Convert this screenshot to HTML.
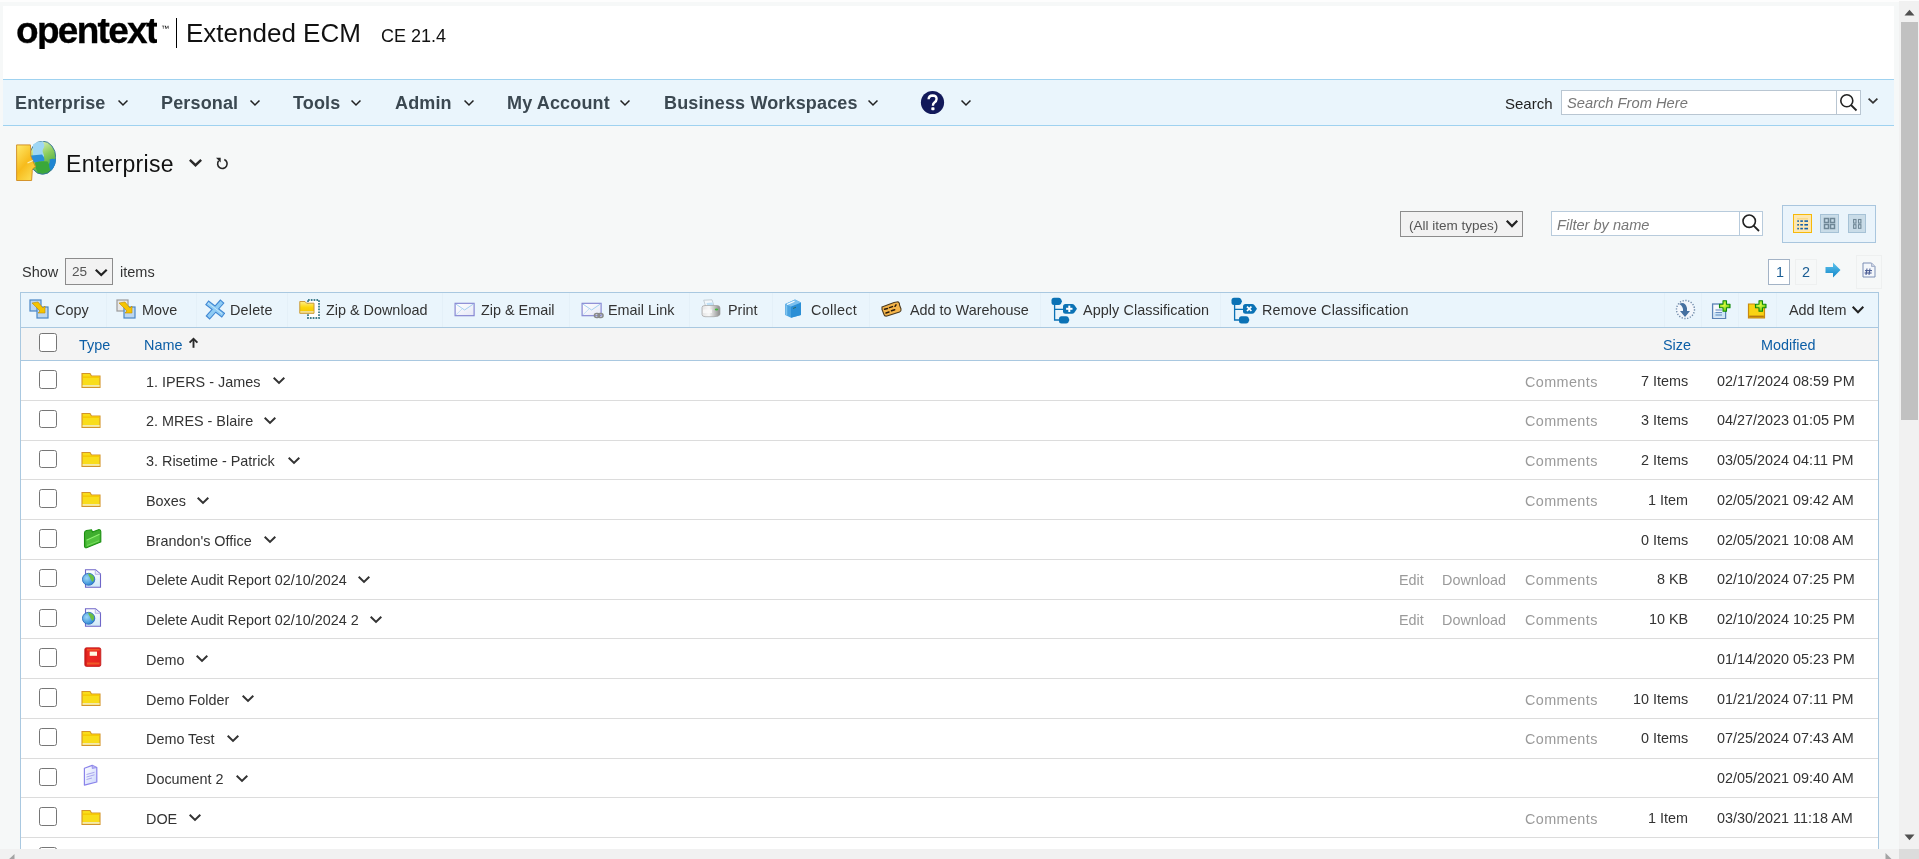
<!DOCTYPE html>
<html><head><meta charset="utf-8"><title>Enterprise</title>
<style>
html,body{margin:0;padding:0;}
body{width:1919px;height:859px;overflow:hidden;position:relative;background:#f6f8f8;font-family:"Liberation Sans",sans-serif;}
.t{position:absolute;white-space:nowrap;will-change:transform;}
.r{position:absolute;}
</style></head><body>
<div class="r" style="left:0px;top:0px;width:1919px;height:2px;background:#fdfdfd"></div>
<div class="r" style="left:3px;top:6px;width:1891px;height:73px;background:#fff"></div>
<div class="r" style="left:3px;top:79px;width:1891px;height:47px;background:#eaf5fc;border-top:1px solid #9fd2f0;border-bottom:1px solid #9fd2f0;box-sizing:border-box"></div>
<div class="t" style="left:15.50px;top:11.98px;font-size:37px;line-height:37px;color:#000;font-weight:bold;font-style:normal;letter-spacing:-1.7px;clip-path:inset(7.4px 0 0.3px 0);-webkit-text-stroke:0.3px #000">opentext</div>
<div class="t" style="left:160.50px;top:24.73px;font-size:8px;line-height:8px;color:#000;font-weight:normal;font-style:normal;">&trade;</div>
<div class="r" style="left:176px;top:18px;width:1px;height:30px;background:#000"></div>
<div class="t" style="left:186.00px;top:20.39px;font-size:26px;line-height:26px;color:#111;font-weight:normal;font-style:normal;">Extended ECM</div>
<div class="t" style="left:381.00px;top:27.16px;font-size:18px;line-height:18px;color:#111;font-weight:normal;font-style:normal;">CE 21.4</div>
<div class="t" style="left:15.00px;top:94.36px;font-size:18px;line-height:18px;color:#3b4851;font-weight:bold;font-style:normal;letter-spacing:0.15px">Enterprise</div>
<svg class="r" style="left:115.5px;top:98px" width="14" height="10" viewBox="0 0 14 10"><polyline points="2.54,2.54 7.00,6.99 11.46,2.54" fill="none" stroke="#222" stroke-width="1.55" stroke-linecap="butt" stroke-linejoin="miter"/></svg>
<div class="t" style="left:161.00px;top:94.36px;font-size:18px;line-height:18px;color:#3b4851;font-weight:bold;font-style:normal;letter-spacing:0.15px">Personal</div>
<svg class="r" style="left:248px;top:98px" width="14" height="10" viewBox="0 0 14 10"><polyline points="2.54,2.54 7.00,6.99 11.46,2.54" fill="none" stroke="#222" stroke-width="1.55" stroke-linecap="butt" stroke-linejoin="miter"/></svg>
<div class="t" style="left:293.00px;top:94.36px;font-size:18px;line-height:18px;color:#3b4851;font-weight:bold;font-style:normal;letter-spacing:0.15px">Tools</div>
<svg class="r" style="left:349px;top:98px" width="14" height="10" viewBox="0 0 14 10"><polyline points="2.54,2.54 7.00,6.99 11.46,2.54" fill="none" stroke="#222" stroke-width="1.55" stroke-linecap="butt" stroke-linejoin="miter"/></svg>
<div class="t" style="left:395.00px;top:94.36px;font-size:18px;line-height:18px;color:#3b4851;font-weight:bold;font-style:normal;letter-spacing:0.15px">Admin</div>
<svg class="r" style="left:461.75px;top:98px" width="14" height="10" viewBox="0 0 14 10"><polyline points="2.54,2.54 7.00,6.99 11.46,2.54" fill="none" stroke="#222" stroke-width="1.55" stroke-linecap="butt" stroke-linejoin="miter"/></svg>
<div class="t" style="left:507.00px;top:94.36px;font-size:18px;line-height:18px;color:#3b4851;font-weight:bold;font-style:normal;letter-spacing:0.15px">My Account</div>
<svg class="r" style="left:618px;top:98px" width="14" height="10" viewBox="0 0 14 10"><polyline points="2.54,2.54 7.00,6.99 11.46,2.54" fill="none" stroke="#222" stroke-width="1.55" stroke-linecap="butt" stroke-linejoin="miter"/></svg>
<div class="t" style="left:664.00px;top:94.36px;font-size:18px;line-height:18px;color:#3b4851;font-weight:bold;font-style:normal;letter-spacing:0.15px">Business Workspaces</div>
<svg class="r" style="left:866px;top:98px" width="14" height="10" viewBox="0 0 14 10"><polyline points="2.54,2.54 7.00,6.99 11.46,2.54" fill="none" stroke="#222" stroke-width="1.55" stroke-linecap="butt" stroke-linejoin="miter"/></svg>
<svg class="r" style="left:920px;top:90px" width="25" height="25" viewBox="0 0 25 25"><circle cx="12.5" cy="12.5" r="11.6" fill="#12195a"/><path d="M8.6 9.3 Q8.8 5.6 12.6 5.5 Q16.6 5.6 16.6 8.9 Q16.5 11.1 14.4 12.4 Q12.9 13.4 12.9 15.7" fill="none" stroke="#fff" stroke-width="2.4"/><rect x="11.3" y="17.3" width="3.2" height="2.9" rx="0.8" fill="#fff"/></svg>
<svg class="r" style="left:958.5px;top:98px" width="14" height="10" viewBox="0 0 14 10"><polyline points="2.54,2.54 7.00,6.99 11.46,2.54" fill="none" stroke="#222" stroke-width="1.55" stroke-linecap="butt" stroke-linejoin="miter"/></svg>
<div class="t" style="left:1505.00px;top:96.30px;font-size:15px;line-height:15px;color:#222;font-weight:normal;font-style:normal;">Search</div>
<div class="r" style="left:1561px;top:90px;width:300px;height:25px;background:#fff;border:1px solid #b9c6d2;box-sizing:border-box"></div>
<div class="r" style="left:1836px;top:90px;width:1px;height:25px;background:#b9c6d2"></div>
<div class="t" style="left:1566.50px;top:95.76px;font-size:14.7px;line-height:14.7px;color:#777;font-weight:normal;font-style:italic;">Search From Here</div>
<svg class="r" style="left:1839px;top:93px" width="19" height="19" viewBox="0 0 19 19"><circle cx="7.8" cy="7.8" r="6" fill="none" stroke="#222" stroke-width="1.6"/><line x1="12" y1="12" x2="17.5" y2="17.5" stroke="#222" stroke-width="1.8"/></svg>
<svg class="r" style="left:1866px;top:95.5px" width="14" height="10" viewBox="0 0 14 10"><polyline points="2.59,2.59 7.00,6.89 11.40,2.59" fill="none" stroke="#333" stroke-width="1.7" stroke-linecap="butt" stroke-linejoin="miter"/></svg>
<svg class="r" style="left:16px;top:141px" width="40" height="40" viewBox="0 0 40 40">
<defs><linearGradient id="gg" x1="0.3" y1="0" x2="0.8" y2="1"><stop offset="0" stop-color="#e8f4c0"/><stop offset="0.45" stop-color="#8ccd5c"/><stop offset="1" stop-color="#2c9a3a"/></linearGradient>
<linearGradient id="fc" x1="0" y1="0" x2="0.6" y2="1"><stop offset="0" stop-color="#ffea6a"/><stop offset="0.6" stop-color="#f7bb1c"/><stop offset="1" stop-color="#fbd84a"/></linearGradient></defs>
<ellipse cx="26.6" cy="16.7" rx="13.2" ry="16.6" fill="url(#gg)" stroke="#2e6e9c" stroke-width="0.9"/>
<path d="M17 3.5 Q21 0.3 27 0.6 Q29 4 28 6.5 Q25.5 9.5 27.5 13 Q29 15 27 17 L17 17z" fill="#9fd6f4"/>
<path d="M15 14.5 L26 13.5 Q29.5 17.5 28 20 Q23 20.5 20 21.5 L15 21z" fill="#2a8fd8"/>
<path d="M33.5 18.5 Q37 17 39.8 18.5 Q39.5 25 35.5 29.5 Q32 27 33 23 Q34.5 21 33.5 18.5z" fill="#1f86d2"/>
<path d="M19 21.5 Q25 19.5 31.5 20.5 Q34 24 33.5 28 Q30 32.5 22 32 Q19 27 19 21.5z" fill="#3aa83a"/>
<path d="M0.6 3.9 H14.4 Q15 9 14.8 15 Q16.5 19 17.2 21 L19.5 25.8 L17 27.5 Q15.8 29 16.2 31 L15.6 39.5 H0.6z" fill="url(#fc)" stroke="#cf8a1e" stroke-width="0.9"/>
<path d="M11.5 22 L17 19.5" stroke="#fff6c8" stroke-width="1.3" opacity="0.9"/>
</svg>
<div class="t" style="left:65.80px;top:153.13px;font-size:23px;line-height:23px;color:#111;font-weight:normal;font-style:normal;letter-spacing:0.3px">Enterprise</div>
<svg class="r" style="left:186.5px;top:157px" width="17" height="11.8" viewBox="0 0 17 11.8"><polyline points="2.84,2.84 8.50,8.24 14.16,2.84" fill="none" stroke="#2a2a2a" stroke-width="2.4" stroke-linecap="butt" stroke-linejoin="miter"/></svg>
<svg class="r" style="left:214px;top:155.3px" width="16" height="16" viewBox="0 0 16 16"><path d="M4.7 5.7 A4.75 4.75 0 1 0 10.3 4.4" fill="none" stroke="#262626" stroke-width="1.6"/><path d="M2 2.8 H6.7 V7.5z" fill="#262626"/></svg>
<div class="r" style="left:1400px;top:211px;width:123px;height:26px;background:#f2f2f2;border:1px solid #8c8c8c;box-sizing:border-box"></div>
<div class="t" style="left:1409.00px;top:218.87px;font-size:13.5px;line-height:13.5px;color:#555;font-weight:normal;font-style:normal;">(All item types)</div>
<svg class="r" style="left:1503.5px;top:218px" width="16" height="11.5" viewBox="0 0 16 11.5"><polyline points="2.77,2.77 8.00,8.07 13.23,2.77" fill="none" stroke="#222" stroke-width="2.2" stroke-linecap="butt" stroke-linejoin="miter"/></svg>
<div class="r" style="left:1551px;top:211px;width:212px;height:25px;background:#fff;border:1px solid #b8cbdc;box-sizing:border-box"></div>
<div class="r" style="left:1739px;top:211px;width:1px;height:25px;background:#b8cbdc"></div>
<div class="t" style="left:1557.00px;top:217.64px;font-size:14.6px;line-height:14.6px;color:#777;font-weight:normal;font-style:italic;">Filter by name</div>
<svg class="r" style="left:1741px;top:213px" width="20" height="20" viewBox="0 0 20 20"><circle cx="8.2" cy="8.2" r="6.2" fill="none" stroke="#222" stroke-width="1.6"/><line x1="12.6" y1="12.6" x2="18" y2="18" stroke="#222" stroke-width="1.8"/></svg>
<div class="r" style="left:1782px;top:205px;width:94px;height:38px;background:#eaf4fb;border:1px solid #a9c6de;box-sizing:border-box"></div>
<div class="r" style="left:1793px;top:214px;width:19px;height:19px;background:#fde7b0;border:1px solid #f6b90a;box-sizing:border-box"></div>
<svg class="r" style="left:1793px;top:214px" width="19" height="19" viewBox="0 0 19 19"><rect x="4" y="4" width="11" height="1.5" fill="#f9d98a"/><g fill="#1260a8"><rect x="4.3" y="6.3" width="1.6" height="1.6"/><rect x="7.3" y="6.3" width="2.6" height="1.6"/><rect x="11.4" y="6.3" width="3.6" height="1.6"/><rect x="4.3" y="10" width="1.6" height="1.6"/><rect x="7.3" y="10" width="2.6" height="1.6"/><rect x="11.4" y="10" width="3.6" height="1.6"/><rect x="4.3" y="13.8" width="1.6" height="1.6"/><rect x="7.3" y="13.8" width="2.6" height="1.6"/><rect x="11.4" y="13.8" width="3.6" height="1.6"/></g></svg>
<div class="r" style="left:1820px;top:214px;width:19px;height:19px;background:#c9dce8;border:1px solid #a6c2d6;box-sizing:border-box"></div>
<svg class="r" style="left:1820px;top:214px" width="19" height="19" viewBox="0 0 19 19"><g fill="none" stroke="#6f8796" stroke-width="1.5"><rect x="4.5" y="4.5" width="4" height="4"/><rect x="10.5" y="4.5" width="4" height="4"/><rect x="4.5" y="10.5" width="4" height="4"/><rect x="10.5" y="10.5" width="4" height="4"/></g></svg>
<div class="r" style="left:1848px;top:214px;width:18px;height:19px;background:#c9dce8;border:1px solid #a6c2d6;box-sizing:border-box"></div>
<svg class="r" style="left:1848px;top:214px" width="18" height="19" viewBox="0 0 18 19"><g fill="none" stroke="#6f8796" stroke-width="1.1"><rect x="5.6" y="5.5" width="2.4" height="3.6"/><rect x="10.5" y="5.5" width="2.4" height="3.6"/><rect x="5.6" y="10.7" width="2.4" height="3.6"/><rect x="10.5" y="10.7" width="2.4" height="3.6"/></g></svg>
<div class="t" style="left:21.50px;top:264.53px;font-size:14.5px;line-height:14.5px;color:#333;font-weight:normal;font-style:normal;">Show</div>
<div class="r" style="left:65px;top:258px;width:48px;height:27px;background:#f2f2f2;border:1px solid #8c8c8c;box-sizing:border-box"></div>
<div class="t" style="left:72.30px;top:265.49px;font-size:13.6px;line-height:13.6px;color:#555;font-weight:normal;font-style:normal;">25</div>
<svg class="r" style="left:93px;top:266.5px" width="16.5" height="11.5" viewBox="0 0 16.5 11.5"><polyline points="2.77,2.77 8.25,8.07 13.73,2.77" fill="none" stroke="#222" stroke-width="2.2" stroke-linecap="butt" stroke-linejoin="miter"/></svg>
<div class="t" style="left:120.00px;top:264.53px;font-size:14.5px;line-height:14.5px;color:#333;font-weight:normal;font-style:normal;">items</div>
<div class="r" style="left:1768px;top:259px;width:22px;height:26px;background:#fff;border:1px solid #a3b3c6;box-sizing:border-box"></div>
<div class="t" style="left:1775.50px;top:264.81px;font-size:14.4px;line-height:14.4px;color:#1a5d94;font-weight:normal;font-style:normal;">1</div>
<div class="r" style="left:1795px;top:259px;width:22px;height:26px;border:1px solid #eef0f0;box-sizing:border-box"></div>
<div class="t" style="left:1801.50px;top:264.81px;font-size:14.4px;line-height:14.4px;color:#1a5d94;font-weight:normal;font-style:normal;">2</div>
<svg class="r" style="left:1825px;top:262px" width="16" height="16" viewBox="0 0 16 16"><defs><linearGradient id="ar" x1="0" y1="0" x2="0" y2="1"><stop offset="0" stop-color="#5fc4ee"/><stop offset="1" stop-color="#1286c8"/></linearGradient></defs><path d="M0.5 5 h7.5 v-4.5 l7.5 7.5 l-7.5 7.5 v-4.5 h-7.5z" fill="url(#ar)"/></svg>
<div class="r" style="left:1856px;top:255px;width:26px;height:34px;border:1px solid #eef0f0;box-sizing:border-box"></div>
<svg class="r" style="left:1862px;top:262px" width="14" height="16" viewBox="0 0 14 16"><path d="M1 1 h8.5 l3.5 3.5 v10.5 h-12z" fill="#f4f7fb" stroke="#7d8fb5" stroke-width="1"/><path d="M9.5 1 v3.5 h3.5" fill="#c8d0e0" stroke="#9aa8c4" stroke-width="0.8"/><g stroke="#4a5c94" stroke-width="1.1"><line x1="5" y1="6.5" x2="4" y2="13"/><line x1="8" y1="6.5" x2="7" y2="13"/><line x1="3" y1="8.6" x2="10" y2="8.6"/><line x1="2.6" y1="11" x2="9.6" y2="11"/></g></svg>
<div class="r" style="left:20px;top:292px;width:1859px;height:567px;background:#fff;border-left:1px solid #a9c8e0;border-right:1px solid #a9c8e0;box-sizing:border-box"></div>
<div class="r" style="left:20px;top:292px;width:1859px;height:36px;background:#eaf5fc;border:1px solid #a9c8e0;box-sizing:border-box"></div>
<div class="r" style="left:21px;top:328px;width:1857px;height:32px;background:#f4f4f4"></div>
<div class="r" style="left:20px;top:360px;width:1859px;height:1px;background:#a9c8e0"></div>
<svg class="r" style="left:29px;top:299px" width="21" height="21" viewBox="0 0 21 21"><rect x="1" y="1" width="11" height="11" fill="#bcd6ef" stroke="#4a86c5" stroke-width="1.2"/>
<rect x="8" y="8" width="11" height="11" fill="#bcd6ef" stroke="#4a86c5" stroke-width="1.2"/>
<path d="M3 4 l6 -1 l5 6 l2 -2 l0 7 l-7 0 l2 -2 l-5 -5z" fill="#f5c400" stroke="#c08a00" stroke-width="0.6"/></svg>
<div class="t" style="left:55.20px;top:303.01px;font-size:14.4px;line-height:14.4px;color:#333;font-weight:normal;font-style:normal;">Copy</div>
<svg class="r" style="left:116px;top:299px" width="21" height="21" viewBox="0 0 21 21"><rect x="1" y="1" width="11" height="11" fill="#e8e8e8" stroke="#9a9a9a" stroke-width="1.2"/>
<rect x="8" y="8" width="11" height="11" fill="#bcd6ef" stroke="#4a86c5" stroke-width="1.2"/>
<path d="M3 4 l6 -1 l5 6 l2 -2 l0 7 l-7 0 l2 -2 l-5 -5z" fill="#f5c400" stroke="#c08a00" stroke-width="0.6"/></svg>
<div class="t" style="left:141.80px;top:303.01px;font-size:14.4px;line-height:14.4px;color:#333;font-weight:normal;font-style:normal;">Move</div>
<svg class="r" style="left:204px;top:299px" width="21" height="21" viewBox="0 0 21 21"><g stroke="#3f86d2" stroke-width="5.6" stroke-linecap="butt"><line x1="2.8" y1="3.6" x2="19.6" y2="16.4"/><line x1="18.4" y1="2.2" x2="3.6" y2="18.8"/></g>
<g stroke="#8ecbf4" stroke-width="3.4" stroke-linecap="butt"><line x1="3.6" y1="4.2" x2="18.8" y2="15.8"/><line x1="17.8" y1="3.0" x2="4.4" y2="18"/></g>
<g stroke="#c4e6fb" stroke-width="1"><line x1="4" y1="4" x2="18" y2="14.6"/></g></svg>
<div class="t" style="left:230.40px;top:303.01px;font-size:14.4px;line-height:14.4px;color:#333;font-weight:normal;font-style:normal;letter-spacing:0.18px">Delete</div>
<svg class="r" style="left:299px;top:299px" width="21" height="21" viewBox="0 0 21 21"><defs><linearGradient id="zf" x1="0" y1="0" x2="0" y2="1"><stop offset="0" stop-color="#ffef8a"/><stop offset="0.5" stop-color="#fbd60c"/><stop offset="1" stop-color="#f3c400"/></linearGradient></defs>
<rect x="9" y="1" width="11" height="18" fill="#fff" stroke="#3f7c8a" stroke-width="1.8" stroke-dasharray="1.7 1.1"/>
<path d="M0.8 2.5 H6 L7.5 4.2 H15 V14.3 H0.8Z" fill="url(#zf)" stroke="#c99a3a" stroke-width="1"/>
<rect x="1.3" y="12" width="13.2" height="1.8" fill="#efdc98"/></svg>
<div class="t" style="left:326.00px;top:303.01px;font-size:14.4px;line-height:14.4px;color:#333;font-weight:normal;font-style:normal;">Zip &amp; Download</div>
<svg class="r" style="left:454px;top:299px" width="21" height="21" viewBox="0 0 21 21"><defs><linearGradient id="ev" x1="0" y1="0" x2="1" y2="1"><stop offset="0" stop-color="#ffffff"/><stop offset="1" stop-color="#e6e8f6"/></linearGradient></defs>
<rect x="1.1" y="4.3" width="19" height="12.4" fill="url(#ev)" stroke="#7f7fcf" stroke-width="1.1"/>
<polyline points="1.8,5 10.6,11 19.4,5" fill="none" stroke="#9ccbee" stroke-width="0.9"/>
<polyline points="1.8,16 8,10 M13.2,10 19.4,16" fill="none" stroke="#b8dcf3" stroke-width="0.8"/></svg>
<div class="t" style="left:481.20px;top:303.01px;font-size:14.4px;line-height:14.4px;color:#333;font-weight:normal;font-style:normal;">Zip &amp; Email</div>
<svg class="r" style="left:581px;top:299px" width="23" height="22" viewBox="0 0 23 22"><defs><linearGradient id="ev2" x1="0" y1="0" x2="1" y2="1"><stop offset="0" stop-color="#ffffff"/><stop offset="1" stop-color="#e6e8f6"/></linearGradient></defs>
<rect x="1.1" y="4.3" width="19" height="12.4" fill="url(#ev2)" stroke="#7f7fcf" stroke-width="1.1"/>
<polyline points="1.8,5 10.6,11 19.4,5" fill="none" stroke="#9ccbee" stroke-width="0.9"/>
<polyline points="1.8,16 8,10 M13.2,10 19.4,16" fill="none" stroke="#b8dcf3" stroke-width="0.8"/>
<g fill="none" stroke="#8a8a8a" stroke-width="1.6"><rect x="13.5" y="14.5" width="5" height="4" rx="2"/><rect x="17" y="14.5" width="5" height="4" rx="2"/></g></svg>
<div class="t" style="left:608.00px;top:303.01px;font-size:14.4px;line-height:14.4px;color:#333;font-weight:normal;font-style:normal;">Email Link</div>
<svg class="r" style="left:701px;top:299px" width="21" height="19" viewBox="0 0 21 19"><defs><linearGradient id="pb" x1="0" y1="0" x2="1" y2="0"><stop offset="0" stop-color="#e4e4e4"/><stop offset="0.4" stop-color="#f8f8f8"/><stop offset="1" stop-color="#8a8a8a"/></linearGradient></defs>
<path d="M2.7 1.2 L11 0.8 L13 7 L5 8.5z" fill="#f4f8fb" stroke="#b8c4cc" stroke-width="0.8"/>
<path d="M5.5 4 L11.5 3.5 L12.5 7 L6.5 8z" fill="#bfe0f6"/>
<path d="M1 8.5 Q1 6.5 4 6.5 L16 6.5 Q19 6.5 19 9 V15.5 Q18 17.7 13 17.7 H4 Q1 17.5 1 15.5z" fill="url(#pb)" stroke="#a0a0a0" stroke-width="0.7"/>
<rect x="2" y="10.5" width="9" height="3.5" fill="#fafafa" opacity="0.8"/>
<ellipse cx="15.5" cy="10.5" rx="1.7" ry="1" fill="#42b840"/></svg>
<div class="t" style="left:728.30px;top:303.01px;font-size:14.4px;line-height:14.4px;color:#333;font-weight:normal;font-style:normal;">Print</div>
<svg class="r" style="left:784px;top:299px" width="19" height="20" viewBox="0 0 19 20"><path d="M1.2 5 L11 0.5 L17 3.5 V16 L7 18.8 L1.2 16z" fill="#4aa3e0"/>
<path d="M7 7.5 L17 3.5 V16 L7 18.8z" fill="#2b8fd6"/>
<path d="M1.2 5 L11 0.5 L17 3.5 L7 7.5z" fill="#7cc0ee"/>
<path d="M3 5.5 L10.5 2.2" stroke="#ffffff" stroke-width="1.2"/>
<path d="M2.7 6.3 V16.5" stroke="#8ccdf4" stroke-width="1"/>
<path d="M9 9.5 L12 8.2" stroke="#2c6a6a" stroke-width="1"/></svg>
<div class="t" style="left:811.20px;top:303.01px;font-size:14.4px;line-height:14.4px;color:#333;font-weight:normal;font-style:normal;letter-spacing:0.28px">Collect</div>
<svg class="r" style="left:881px;top:300px" width="22" height="18" viewBox="0 0 22 18"><path d="M1 7 L13 2.5 L17 1.8 Q19 3 18.5 5 L20 9 Q20.5 11 18.5 12 L6 16 Q3.5 16.5 3 14.5 L1 9.5z" fill="#f4b44a" stroke="#4a3a20" stroke-width="1.1"/>
<g stroke="#2a1a08" stroke-width="1.5" stroke-linecap="round"><line x1="3.5" y1="9.2" x2="6.5" y2="8.6"/><line x1="8.5" y1="7.6" x2="11.5" y2="6.6"/><line x1="14" y1="6.3" x2="15" y2="4.8"/><line x1="5" y1="13" x2="8" y2="12"/><line x1="10.5" y1="10.7" x2="13.7" y2="9.7"/></g></svg>
<div class="t" style="left:909.50px;top:303.01px;font-size:14.4px;line-height:14.4px;color:#333;font-weight:normal;font-style:normal;">Add to Warehouse</div>
<svg class="r" style="left:1051px;top:297px" width="27" height="27" viewBox="0 0 27 27"><g fill="#0b72b5"><path d="M3 0.7 H7.5 Q9 0.7 10 2 L11 4.35 L10 6.7 Q9 8 7.5 8 H3 Q0.5 8 0.5 5.5 V3.2 Q0.5 0.7 3 0.7Z"/>
<path d="M14.5 6.9 H21 Q22.5 6.9 23.5 8.2 L26 11.8 L23.5 15.4 Q22.5 16.7 21 16.7 H14.5 Q12 16.7 12 14.2 V9.4 Q12 6.9 14.5 6.9Z"/>
<path d="M10.5 19.2 H15 Q16.5 19.2 17.3 20.3 L18.4 22.9 L17.3 25.5 Q16.5 26.6 15 26.6 H10.5 Q8 26.6 8 24.1 V21.7 Q8 19.2 10.5 19.2Z"/></g>
<path d="M3.6 7 V23 H8.5 M3.6 12.3 H12.5" fill="none" stroke="#0b72b5" stroke-width="1.3"/>
<g stroke="#fff" stroke-width="2"><line x1="18.3" y1="8.6" x2="18.3" y2="15"/><line x1="15.1" y1="11.8" x2="21.5" y2="11.8"/></g></svg>
<div class="t" style="left:1083.00px;top:303.01px;font-size:14.4px;line-height:14.4px;color:#333;font-weight:normal;font-style:normal;letter-spacing:0.07px">Apply Classification</div>
<svg class="r" style="left:1231px;top:297px" width="27" height="27" viewBox="0 0 27 27"><g fill="#0b72b5"><path d="M3 0.7 H7.5 Q9 0.7 10 2 L11 4.35 L10 6.7 Q9 8 7.5 8 H3 Q0.5 8 0.5 5.5 V3.2 Q0.5 0.7 3 0.7Z"/>
<path d="M14.5 6.9 H21 Q22.5 6.9 23.5 8.2 L26 11.8 L23.5 15.4 Q22.5 16.7 21 16.7 H14.5 Q12 16.7 12 14.2 V9.4 Q12 6.9 14.5 6.9Z"/>
<path d="M10.5 19.2 H15 Q16.5 19.2 17.3 20.3 L18.4 22.9 L17.3 25.5 Q16.5 26.6 15 26.6 H10.5 Q8 26.6 8 24.1 V21.7 Q8 19.2 10.5 19.2Z"/></g>
<path d="M3.6 7 V23 H8.5 M3.6 12.3 H12.5" fill="none" stroke="#0b72b5" stroke-width="1.3"/>
<g stroke="#fff" stroke-width="1.7"><line x1="16" y1="9.6" x2="20.4" y2="14"/><line x1="20.4" y1="9.6" x2="16" y2="14"/></g></svg>
<div class="t" style="left:1262.00px;top:303.01px;font-size:14.4px;line-height:14.4px;color:#333;font-weight:normal;font-style:normal;letter-spacing:0.21px">Remove Classification</div>
<div class="r" style="left:106px;top:293px;width:1px;height:34px;background:#e4f0f8"></div>
<div class="r" style="left:196px;top:293px;width:1px;height:34px;background:#e4f0f8"></div>
<div class="r" style="left:287px;top:293px;width:1px;height:34px;background:#e4f0f8"></div>
<div class="r" style="left:442px;top:293px;width:1px;height:34px;background:#e4f0f8"></div>
<div class="r" style="left:569px;top:293px;width:1px;height:34px;background:#e4f0f8"></div>
<div class="r" style="left:689px;top:293px;width:1px;height:34px;background:#e4f0f8"></div>
<div class="r" style="left:772px;top:293px;width:1px;height:34px;background:#e4f0f8"></div>
<div class="r" style="left:869px;top:293px;width:1px;height:34px;background:#e4f0f8"></div>
<div class="r" style="left:1040px;top:293px;width:1px;height:34px;background:#e4f0f8"></div>
<div class="r" style="left:1220px;top:293px;width:1px;height:34px;background:#e4f0f8"></div>
<div class="r" style="left:1664px;top:293px;width:1px;height:34px;background:#e4f0f8"></div>
<div class="r" style="left:1701px;top:293px;width:1px;height:34px;background:#e4f0f8"></div>
<div class="r" style="left:1738px;top:293px;width:1px;height:34px;background:#e4f0f8"></div>
<div class="r" style="left:1776px;top:293px;width:1px;height:34px;background:#e4f0f8"></div>
<svg class="r" style="left:1675px;top:299px" width="21" height="21" viewBox="0 0 21 21"><circle cx="10.5" cy="10.5" r="9" fill="#f2f6fb" stroke="#6b86a6" stroke-width="1.4" stroke-dasharray="1.2 1.6"/>
<path d="M4 5 q6 -3 8 4 v3 h3 l-5 6 l-5 -6 h3 v-2 q-1 -4 -4 -5z" fill="#4570a0"/></svg>
<svg class="r" style="left:1711px;top:297px" width="22" height="22" viewBox="0 0 22 22"><rect x="1.6" y="7" width="13" height="14.5" fill="#f6f9fd" stroke="#5b83b5" stroke-width="1.3"/>
<rect x="3" y="15" width="11" height="5" fill="#cde6f8"/><g stroke="#6a8fbf" stroke-width="1.1"><line x1="4.5" y1="13" x2="11" y2="13"/><line x1="4.5" y1="15.5" x2="11" y2="15.5"/><line x1="4.5" y1="18" x2="11" y2="18"/></g>
<defs><radialGradient id="pl" cx="0.4" cy="0.4" r="0.7"><stop offset="0" stop-color="#e8ff40"/><stop offset="1" stop-color="#52c010"/></radialGradient></defs><path d="M12 3.7 h3.5 v3.5 h3.5 v3.5 h-3.5 v3.5 h-3.5 v-3.5 h-3.5 v-3.5 h3.5z" fill="url(#pl)" stroke="#0f8a0a" stroke-width="1.1" stroke-linejoin="round"/></svg>
<svg class="r" style="left:1747px;top:297px" width="22" height="22" viewBox="0 0 22 22"><path d="M1.5 7 h6 l1.5 2 h8.5 v12 h-16z" fill="#f9d313" stroke="#c98a10" stroke-width="1.2"/><rect x="2.2" y="18.6" width="14.6" height="1.8" fill="#b87a10"/>
<defs><radialGradient id="pl" cx="0.4" cy="0.4" r="0.7"><stop offset="0" stop-color="#e8ff40"/><stop offset="1" stop-color="#52c010"/></radialGradient></defs><path d="M12 3.7 h3.5 v3.5 h3.5 v3.5 h-3.5 v3.5 h-3.5 v-3.5 h-3.5 v-3.5 h3.5z" fill="url(#pl)" stroke="#0f8a0a" stroke-width="1.1" stroke-linejoin="round"/></svg>
<div class="t" style="left:1788.50px;top:303.01px;font-size:14.4px;line-height:14.4px;color:#333;font-weight:normal;font-style:normal;">Add Item</div>
<svg class="r" style="left:1850px;top:304px" width="16" height="11.5" viewBox="0 0 16 11.5"><polyline points="2.70,2.70 8.00,8.20 13.30,2.70" fill="none" stroke="#222" stroke-width="2.0" stroke-linecap="butt" stroke-linejoin="miter"/></svg>
<div class="r" style="left:39px;top:333px;width:17.8px;height:18.6px;background:#fff;border:1.6px solid #767676;border-radius:2.6px;box-sizing:border-box"></div>
<div class="t" style="left:79.00px;top:337.81px;font-size:14.4px;line-height:14.4px;color:#0c5ea6;font-weight:normal;font-style:normal;">Type</div>
<div class="t" style="left:144.00px;top:337.81px;font-size:14.4px;line-height:14.4px;color:#0c5ea6;font-weight:normal;font-style:normal;">Name</div>
<svg class="r" style="left:188px;top:337px" width="11" height="12" viewBox="0 0 11 12"><path d="M5.5 2 v8.8" stroke="#2a2a2a" stroke-width="1.9"/><polyline points="1.6,5.6 5.5,1.8 9.4,5.6" fill="none" stroke="#2a2a2a" stroke-width="1.9"/></svg>
<div class="t" style="left:1663.00px;top:337.81px;font-size:14.4px;line-height:14.4px;color:#0c5ea6;font-weight:normal;font-style:normal;">Size</div>
<div class="t" style="left:1760.50px;top:337.81px;font-size:14.4px;line-height:14.4px;color:#0c5ea6;font-weight:normal;font-style:normal;">Modified</div>
<div class="r" style="left:21px;top:400px;width:1857px;height:1px;background:#dcdcdc"></div>
<div class="r" style="left:39px;top:370.1px;width:17.8px;height:18.6px;background:#fff;border:1.6px solid #767676;border-radius:2.6px;box-sizing:border-box"></div>
<svg class="r" style="left:81px;top:372px" width="20" height="17" viewBox="0 0 20 17"><path d="M1 1.5 h8 l1.5 2.5 h8.5 v11.5 h-18z" fill="#f9dd1a" stroke="#d3942a" stroke-width="1.1"/>
<rect x="1.6" y="4.5" width="17" height="1.3" fill="#f6c400"/><rect x="1.6" y="13" width="17" height="1.8" fill="#f3e7b0"/></svg>
<div class="t" style="left:145.50px;top:374.71px;font-size:14.4px;line-height:14.4px;color:#333;font-weight:normal;font-style:normal;">1. IPERS - James</div>
<svg class="r" style="left:271px;top:375.29999999999995px" width="16" height="11.2" viewBox="0 0 16 11.2"><polyline points="2.70,2.70 8.00,7.90 13.30,2.70" fill="none" stroke="#333" stroke-width="2.0" stroke-linecap="butt" stroke-linejoin="miter"/></svg>
<div class="t" style="left:1525.00px;top:374.71px;font-size:14.4px;line-height:14.4px;color:#9a9a9a;font-weight:normal;font-style:normal;letter-spacing:0.4px">Comments</div>
<div class="t" style="right:231px;top:373.71px;font-size:14.4px;line-height:14.4px;color:#333">7 Items</div>
<div class="t" style="left:1716.50px;top:373.71px;font-size:14.4px;line-height:14.4px;color:#333;font-weight:normal;font-style:normal;">02/17/2024 08:59 PM</div>
<div class="r" style="left:21px;top:440px;width:1857px;height:1px;background:#dcdcdc"></div>
<div class="r" style="left:39px;top:409.84000000000003px;width:17.8px;height:18.6px;background:#fff;border:1.6px solid #767676;border-radius:2.6px;box-sizing:border-box"></div>
<svg class="r" style="left:81px;top:412px" width="20" height="17" viewBox="0 0 20 17"><path d="M1 1.5 h8 l1.5 2.5 h8.5 v11.5 h-18z" fill="#f9dd1a" stroke="#d3942a" stroke-width="1.1"/>
<rect x="1.6" y="4.5" width="17" height="1.3" fill="#f6c400"/><rect x="1.6" y="13" width="17" height="1.8" fill="#f3e7b0"/></svg>
<div class="t" style="left:145.50px;top:414.45px;font-size:14.4px;line-height:14.4px;color:#333;font-weight:normal;font-style:normal;">2. MRES - Blaire</div>
<svg class="r" style="left:261.9px;top:415.03999999999996px" width="16" height="11.2" viewBox="0 0 16 11.2"><polyline points="2.70,2.70 8.00,7.90 13.30,2.70" fill="none" stroke="#333" stroke-width="2.0" stroke-linecap="butt" stroke-linejoin="miter"/></svg>
<div class="t" style="left:1525.00px;top:414.45px;font-size:14.4px;line-height:14.4px;color:#9a9a9a;font-weight:normal;font-style:normal;letter-spacing:0.4px">Comments</div>
<div class="t" style="right:231px;top:413.45px;font-size:14.4px;line-height:14.4px;color:#333">3 Items</div>
<div class="t" style="left:1716.50px;top:413.45px;font-size:14.4px;line-height:14.4px;color:#333;font-weight:normal;font-style:normal;">04/27/2023 01:05 PM</div>
<div class="r" style="left:21px;top:479px;width:1857px;height:1px;background:#dcdcdc"></div>
<div class="r" style="left:39px;top:449.58000000000004px;width:17.8px;height:18.6px;background:#fff;border:1.6px solid #767676;border-radius:2.6px;box-sizing:border-box"></div>
<svg class="r" style="left:81px;top:451px" width="20" height="17" viewBox="0 0 20 17"><path d="M1 1.5 h8 l1.5 2.5 h8.5 v11.5 h-18z" fill="#f9dd1a" stroke="#d3942a" stroke-width="1.1"/>
<rect x="1.6" y="4.5" width="17" height="1.3" fill="#f6c400"/><rect x="1.6" y="13" width="17" height="1.8" fill="#f3e7b0"/></svg>
<div class="t" style="left:145.50px;top:454.19px;font-size:14.4px;line-height:14.4px;color:#333;font-weight:normal;font-style:normal;">3. Risetime - Patrick</div>
<svg class="r" style="left:286.1px;top:454.78px" width="16" height="11.2" viewBox="0 0 16 11.2"><polyline points="2.70,2.70 8.00,7.90 13.30,2.70" fill="none" stroke="#333" stroke-width="2.0" stroke-linecap="butt" stroke-linejoin="miter"/></svg>
<div class="t" style="left:1525.00px;top:454.19px;font-size:14.4px;line-height:14.4px;color:#9a9a9a;font-weight:normal;font-style:normal;letter-spacing:0.4px">Comments</div>
<div class="t" style="right:231px;top:453.19px;font-size:14.4px;line-height:14.4px;color:#333">2 Items</div>
<div class="t" style="left:1716.50px;top:453.19px;font-size:14.4px;line-height:14.4px;color:#333;font-weight:normal;font-style:normal;">03/05/2024 04:11 PM</div>
<div class="r" style="left:21px;top:519px;width:1857px;height:1px;background:#dcdcdc"></div>
<div class="r" style="left:39px;top:489.32000000000005px;width:17.8px;height:18.6px;background:#fff;border:1.6px solid #767676;border-radius:2.6px;box-sizing:border-box"></div>
<svg class="r" style="left:81px;top:491px" width="20" height="17" viewBox="0 0 20 17"><path d="M1 1.5 h8 l1.5 2.5 h8.5 v11.5 h-18z" fill="#f9dd1a" stroke="#d3942a" stroke-width="1.1"/>
<rect x="1.6" y="4.5" width="17" height="1.3" fill="#f6c400"/><rect x="1.6" y="13" width="17" height="1.8" fill="#f3e7b0"/></svg>
<div class="t" style="left:145.50px;top:493.93px;font-size:14.4px;line-height:14.4px;color:#333;font-weight:normal;font-style:normal;">Boxes</div>
<svg class="r" style="left:194.7px;top:494.52px" width="16" height="11.2" viewBox="0 0 16 11.2"><polyline points="2.70,2.70 8.00,7.90 13.30,2.70" fill="none" stroke="#333" stroke-width="2.0" stroke-linecap="butt" stroke-linejoin="miter"/></svg>
<div class="t" style="left:1525.00px;top:493.93px;font-size:14.4px;line-height:14.4px;color:#9a9a9a;font-weight:normal;font-style:normal;letter-spacing:0.4px">Comments</div>
<div class="t" style="right:231px;top:492.93px;font-size:14.4px;line-height:14.4px;color:#333">1 Item</div>
<div class="t" style="left:1716.50px;top:492.93px;font-size:14.4px;line-height:14.4px;color:#333;font-weight:normal;font-style:normal;">02/05/2021 09:42 AM</div>
<div class="r" style="left:21px;top:559px;width:1857px;height:1px;background:#dcdcdc"></div>
<div class="r" style="left:39px;top:529.0600000000001px;width:17.8px;height:18.6px;background:#fff;border:1.6px solid #767676;border-radius:2.6px;box-sizing:border-box"></div>
<svg class="r" style="left:83px;top:528px" width="19" height="21" viewBox="0 0 19 21"><path d="M1.5 5 Q1.5 3 3.5 2.5 L8.5 1.8 L9.5 4 L16 1.5 Q17.8 1.5 17.8 3.5 V14 L3.5 19.8 Q1.5 20 1.5 18z" fill="#3fae2e" stroke="#1a9010" stroke-width="1.1"/>
<path d="M3.3 12.5 L16.5 6 V13.6 L3.5 19z" fill="#52c23e"/><path d="M3.5 12.3 L16.5 6.2" stroke="#8ef070" stroke-width="1.1"/><path d="M4 17.5 L16 12.8" stroke="#7ee060" stroke-width="0.8"/></svg>
<div class="t" style="left:145.50px;top:533.67px;font-size:14.4px;line-height:14.4px;color:#333;font-weight:normal;font-style:normal;">Brandon&#x27;s Office</div>
<svg class="r" style="left:262.4px;top:534.26px" width="16" height="11.2" viewBox="0 0 16 11.2"><polyline points="2.70,2.70 8.00,7.90 13.30,2.70" fill="none" stroke="#333" stroke-width="2.0" stroke-linecap="butt" stroke-linejoin="miter"/></svg>
<div class="t" style="right:231px;top:532.67px;font-size:14.4px;line-height:14.4px;color:#333">0 Items</div>
<div class="t" style="left:1716.50px;top:532.67px;font-size:14.4px;line-height:14.4px;color:#333;font-weight:normal;font-style:normal;">02/05/2021 10:08 AM</div>
<div class="r" style="left:21px;top:599px;width:1857px;height:1px;background:#dcdcdc"></div>
<div class="r" style="left:39px;top:568.8000000000001px;width:17.8px;height:18.6px;background:#fff;border:1.6px solid #767676;border-radius:2.6px;box-sizing:border-box"></div>
<svg class="r" style="left:82px;top:568px" width="20" height="21" viewBox="0 0 20 21"><defs><linearGradient id="ad" x1="0" y1="0" x2="0" y2="1"><stop offset="0" stop-color="#ffffff"/><stop offset="1" stop-color="#cfe8f8"/></linearGradient>
<radialGradient id="ag" cx="0.35" cy="0.4" r="0.7"><stop offset="0" stop-color="#9fd8f8"/><stop offset="1" stop-color="#1f7fd0"/></radialGradient></defs>
<path d="M3.5 1.8 H13.5 L18.5 6 V19.3 H3.5z" fill="url(#ad)" stroke="#6f66c8" stroke-width="1.1"/>
<path d="M13.3 2 V6.3 H18.3" fill="#e8ecfa" stroke="#a9a4e0" stroke-width="0.8"/>
<ellipse cx="6.6" cy="11.3" rx="6.2" ry="6" fill="url(#ag)" stroke="#2a64b8" stroke-width="0.8"/>
<path d="M6 5.6 Q10.5 6 12 9.5 Q12.3 13 10.8 14 Q8.5 12 7.8 9.5 Q6.5 7.5 6 5.6z" fill="#6cc040"/></svg>
<div class="t" style="left:145.50px;top:573.41px;font-size:14.4px;line-height:14.4px;color:#333;font-weight:normal;font-style:normal;">Delete Audit Report 02/10/2024</div>
<svg class="r" style="left:355.8px;top:574.0px" width="16" height="11.2" viewBox="0 0 16 11.2"><polyline points="2.70,2.70 8.00,7.90 13.30,2.70" fill="none" stroke="#333" stroke-width="2.0" stroke-linecap="butt" stroke-linejoin="miter"/></svg>
<div class="t" style="left:1399.00px;top:573.41px;font-size:14.4px;line-height:14.4px;color:#9a9a9a;font-weight:normal;font-style:normal;">Edit</div>
<div class="t" style="left:1442.00px;top:573.41px;font-size:14.4px;line-height:14.4px;color:#9a9a9a;font-weight:normal;font-style:normal;">Download</div>
<div class="t" style="left:1525.00px;top:573.41px;font-size:14.4px;line-height:14.4px;color:#9a9a9a;font-weight:normal;font-style:normal;letter-spacing:0.4px">Comments</div>
<div class="t" style="right:231px;top:572.41px;font-size:14.4px;line-height:14.4px;color:#333">8 KB</div>
<div class="t" style="left:1716.50px;top:572.41px;font-size:14.4px;line-height:14.4px;color:#333;font-weight:normal;font-style:normal;">02/10/2024 07:25 PM</div>
<div class="r" style="left:21px;top:638px;width:1857px;height:1px;background:#dcdcdc"></div>
<div class="r" style="left:39px;top:608.5400000000001px;width:17.8px;height:18.6px;background:#fff;border:1.6px solid #767676;border-radius:2.6px;box-sizing:border-box"></div>
<svg class="r" style="left:82px;top:607px" width="20" height="21" viewBox="0 0 20 21"><defs><linearGradient id="ad" x1="0" y1="0" x2="0" y2="1"><stop offset="0" stop-color="#ffffff"/><stop offset="1" stop-color="#cfe8f8"/></linearGradient>
<radialGradient id="ag" cx="0.35" cy="0.4" r="0.7"><stop offset="0" stop-color="#9fd8f8"/><stop offset="1" stop-color="#1f7fd0"/></radialGradient></defs>
<path d="M3.5 1.8 H13.5 L18.5 6 V19.3 H3.5z" fill="url(#ad)" stroke="#6f66c8" stroke-width="1.1"/>
<path d="M13.3 2 V6.3 H18.3" fill="#e8ecfa" stroke="#a9a4e0" stroke-width="0.8"/>
<ellipse cx="6.6" cy="11.3" rx="6.2" ry="6" fill="url(#ag)" stroke="#2a64b8" stroke-width="0.8"/>
<path d="M6 5.6 Q10.5 6 12 9.5 Q12.3 13 10.8 14 Q8.5 12 7.8 9.5 Q6.5 7.5 6 5.6z" fill="#6cc040"/></svg>
<div class="t" style="left:145.50px;top:613.15px;font-size:14.4px;line-height:14.4px;color:#333;font-weight:normal;font-style:normal;">Delete Audit Report 02/10/2024 2</div>
<svg class="r" style="left:368px;top:613.74px" width="16" height="11.2" viewBox="0 0 16 11.2"><polyline points="2.70,2.70 8.00,7.90 13.30,2.70" fill="none" stroke="#333" stroke-width="2.0" stroke-linecap="butt" stroke-linejoin="miter"/></svg>
<div class="t" style="left:1399.00px;top:613.15px;font-size:14.4px;line-height:14.4px;color:#9a9a9a;font-weight:normal;font-style:normal;">Edit</div>
<div class="t" style="left:1442.00px;top:613.15px;font-size:14.4px;line-height:14.4px;color:#9a9a9a;font-weight:normal;font-style:normal;">Download</div>
<div class="t" style="left:1525.00px;top:613.15px;font-size:14.4px;line-height:14.4px;color:#9a9a9a;font-weight:normal;font-style:normal;letter-spacing:0.4px">Comments</div>
<div class="t" style="right:231px;top:612.15px;font-size:14.4px;line-height:14.4px;color:#333">10 KB</div>
<div class="t" style="left:1716.50px;top:612.15px;font-size:14.4px;line-height:14.4px;color:#333;font-weight:normal;font-style:normal;">02/10/2024 10:25 PM</div>
<div class="r" style="left:21px;top:678px;width:1857px;height:1px;background:#dcdcdc"></div>
<div class="r" style="left:39px;top:648.2800000000001px;width:17.8px;height:18.6px;background:#fff;border:1.6px solid #767676;border-radius:2.6px;box-sizing:border-box"></div>
<svg class="r" style="left:84px;top:647px" width="18" height="21" viewBox="0 0 18 21"><defs><linearGradient id="bk" x1="0" y1="0" x2="1" y2="0"><stop offset="0" stop-color="#c81818"/><stop offset="0.2" stop-color="#ee2a22"/><stop offset="1" stop-color="#e22420"/></linearGradient></defs>
<rect x="0.8" y="0.8" width="16" height="18.6" rx="1.6" fill="url(#bk)" stroke="#c01818" stroke-width="0.8"/>
<rect x="3" y="2" width="12.5" height="1.6" fill="#f26a2a" opacity="0.7"/>
<rect x="3" y="15.5" width="12.5" height="2" fill="#f0682a" opacity="0.8"/>
<rect x="5.7" y="4.6" width="7.3" height="4.2" fill="#fffbe0"/></svg>
<div class="t" style="left:145.50px;top:652.89px;font-size:14.4px;line-height:14.4px;color:#333;font-weight:normal;font-style:normal;">Demo</div>
<svg class="r" style="left:194px;top:653.48px" width="16" height="11.2" viewBox="0 0 16 11.2"><polyline points="2.70,2.70 8.00,7.90 13.30,2.70" fill="none" stroke="#333" stroke-width="2.0" stroke-linecap="butt" stroke-linejoin="miter"/></svg>
<div class="t" style="left:1716.50px;top:651.89px;font-size:14.4px;line-height:14.4px;color:#333;font-weight:normal;font-style:normal;">01/14/2020 05:23 PM</div>
<div class="r" style="left:21px;top:718px;width:1857px;height:1px;background:#dcdcdc"></div>
<div class="r" style="left:39px;top:688.0200000000001px;width:17.8px;height:18.6px;background:#fff;border:1.6px solid #767676;border-radius:2.6px;box-sizing:border-box"></div>
<svg class="r" style="left:81px;top:690px" width="20" height="17" viewBox="0 0 20 17"><path d="M1 1.5 h8 l1.5 2.5 h8.5 v11.5 h-18z" fill="#f9dd1a" stroke="#d3942a" stroke-width="1.1"/>
<rect x="1.6" y="4.5" width="17" height="1.3" fill="#f6c400"/><rect x="1.6" y="13" width="17" height="1.8" fill="#f3e7b0"/></svg>
<div class="t" style="left:145.50px;top:692.63px;font-size:14.4px;line-height:14.4px;color:#333;font-weight:normal;font-style:normal;">Demo Folder</div>
<svg class="r" style="left:239.9px;top:693.22px" width="16" height="11.2" viewBox="0 0 16 11.2"><polyline points="2.70,2.70 8.00,7.90 13.30,2.70" fill="none" stroke="#333" stroke-width="2.0" stroke-linecap="butt" stroke-linejoin="miter"/></svg>
<div class="t" style="left:1525.00px;top:692.63px;font-size:14.4px;line-height:14.4px;color:#9a9a9a;font-weight:normal;font-style:normal;letter-spacing:0.4px">Comments</div>
<div class="t" style="right:231px;top:691.63px;font-size:14.4px;line-height:14.4px;color:#333">10 Items</div>
<div class="t" style="left:1716.50px;top:691.63px;font-size:14.4px;line-height:14.4px;color:#333;font-weight:normal;font-style:normal;">01/21/2024 07:11 PM</div>
<div class="r" style="left:21px;top:758px;width:1857px;height:1px;background:#dcdcdc"></div>
<div class="r" style="left:39px;top:727.7600000000001px;width:17.8px;height:18.6px;background:#fff;border:1.6px solid #767676;border-radius:2.6px;box-sizing:border-box"></div>
<svg class="r" style="left:81px;top:730px" width="20" height="17" viewBox="0 0 20 17"><path d="M1 1.5 h8 l1.5 2.5 h8.5 v11.5 h-18z" fill="#f9dd1a" stroke="#d3942a" stroke-width="1.1"/>
<rect x="1.6" y="4.5" width="17" height="1.3" fill="#f6c400"/><rect x="1.6" y="13" width="17" height="1.8" fill="#f3e7b0"/></svg>
<div class="t" style="left:145.50px;top:732.37px;font-size:14.4px;line-height:14.4px;color:#333;font-weight:normal;font-style:normal;">Demo Test</div>
<svg class="r" style="left:225.3px;top:732.96px" width="16" height="11.2" viewBox="0 0 16 11.2"><polyline points="2.70,2.70 8.00,7.90 13.30,2.70" fill="none" stroke="#333" stroke-width="2.0" stroke-linecap="butt" stroke-linejoin="miter"/></svg>
<div class="t" style="left:1525.00px;top:732.37px;font-size:14.4px;line-height:14.4px;color:#9a9a9a;font-weight:normal;font-style:normal;letter-spacing:0.4px">Comments</div>
<div class="t" style="right:231px;top:731.37px;font-size:14.4px;line-height:14.4px;color:#333">0 Items</div>
<div class="t" style="left:1716.50px;top:731.37px;font-size:14.4px;line-height:14.4px;color:#333;font-weight:normal;font-style:normal;">07/25/2024 07:43 AM</div>
<div class="r" style="left:21px;top:797px;width:1857px;height:1px;background:#dcdcdc"></div>
<div class="r" style="left:39px;top:767.5000000000001px;width:17.8px;height:18.6px;background:#fff;border:1.6px solid #767676;border-radius:2.6px;box-sizing:border-box"></div>
<svg class="r" style="left:83px;top:764px" width="15" height="23" viewBox="0 0 15 23"><defs><linearGradient id="dc" x1="0" y1="0" x2="1" y2="1"><stop offset="0" stop-color="#ffffff"/><stop offset="1" stop-color="#c9d4fb"/></linearGradient></defs>
<path d="M1.4 4.2 L9.2 1.4 L13.8 3.6 V18 L1.4 21.2z" fill="url(#dc)" stroke="#8a83ea" stroke-width="1.2" stroke-linejoin="round"/>
<path d="M9.2 1.4 V4.5 L13.8 3.6" fill="#b8b4f0" stroke="#8a83ea" stroke-width="0.7"/>
<g stroke="#a9a6ee" stroke-width="1"><line x1="3.5" y1="10.5" x2="11.5" y2="8.3"/><line x1="3.5" y1="13" x2="11.5" y2="10.8"/><line x1="3.5" y1="15.5" x2="9" y2="14"/></g></svg>
<div class="t" style="left:145.50px;top:772.11px;font-size:14.4px;line-height:14.4px;color:#333;font-weight:normal;font-style:normal;">Document 2</div>
<svg class="r" style="left:234px;top:772.7px" width="16" height="11.2" viewBox="0 0 16 11.2"><polyline points="2.70,2.70 8.00,7.90 13.30,2.70" fill="none" stroke="#333" stroke-width="2.0" stroke-linecap="butt" stroke-linejoin="miter"/></svg>
<div class="t" style="left:1716.50px;top:771.11px;font-size:14.4px;line-height:14.4px;color:#333;font-weight:normal;font-style:normal;">02/05/2021 09:40 AM</div>
<div class="r" style="left:21px;top:837px;width:1857px;height:1px;background:#dcdcdc"></div>
<div class="r" style="left:39px;top:807.2400000000001px;width:17.8px;height:18.6px;background:#fff;border:1.6px solid #767676;border-radius:2.6px;box-sizing:border-box"></div>
<svg class="r" style="left:81px;top:809px" width="20" height="17" viewBox="0 0 20 17"><path d="M1 1.5 h8 l1.5 2.5 h8.5 v11.5 h-18z" fill="#f9dd1a" stroke="#d3942a" stroke-width="1.1"/>
<rect x="1.6" y="4.5" width="17" height="1.3" fill="#f6c400"/><rect x="1.6" y="13" width="17" height="1.8" fill="#f3e7b0"/></svg>
<div class="t" style="left:145.50px;top:811.85px;font-size:14.4px;line-height:14.4px;color:#333;font-weight:normal;font-style:normal;">DOE</div>
<svg class="r" style="left:187px;top:812.44px" width="16" height="11.2" viewBox="0 0 16 11.2"><polyline points="2.70,2.70 8.00,7.90 13.30,2.70" fill="none" stroke="#333" stroke-width="2.0" stroke-linecap="butt" stroke-linejoin="miter"/></svg>
<div class="t" style="left:1525.00px;top:811.85px;font-size:14.4px;line-height:14.4px;color:#9a9a9a;font-weight:normal;font-style:normal;letter-spacing:0.4px">Comments</div>
<div class="t" style="right:231px;top:810.85px;font-size:14.4px;line-height:14.4px;color:#333">1 Item</div>
<div class="t" style="left:1716.50px;top:810.85px;font-size:14.4px;line-height:14.4px;color:#333;font-weight:normal;font-style:normal;">03/30/2021 11:18 AM</div>
<div class="r" style="left:39px;top:847px;width:17.8px;height:18.6px;background:#fff;border:1.6px solid #767676;border-radius:2.6px;box-sizing:border-box"></div>
<div class="r" style="left:1899px;top:1px;width:20px;height:848px;background:#f1f1f1"></div>
<div class="r" style="left:1901px;top:22px;width:17px;height:398px;background:#c1c1c1"></div>
<svg class="r" style="left:1904px;top:9px" width="11" height="7" viewBox="0 0 11 7"><path d="M0.5 6.5 L5.5 0.8 L10.5 6.5z" fill="#505050"/></svg>
<svg class="r" style="left:1904px;top:834px" width="11" height="7" viewBox="0 0 11 7"><path d="M0.5 0.5 L5.5 6.2 L10.5 0.5z" fill="#505050"/></svg>
<div class="r" style="left:0px;top:849px;width:1899px;height:10px;background:#f1f1f1"></div>
<div class="r" style="left:1899px;top:849px;width:20px;height:10px;background:#dcdcdc"></div>
<svg class="r" style="left:8.5px;top:854px" width="6" height="5" viewBox="0 0 6 5"><path d="M5.5 0 L0.2 5 L5.5 5z" fill="#a3a3a3"/></svg>
<svg class="r" style="left:1885px;top:853px" width="7" height="6" viewBox="0 0 7 6"><path d="M0.5 0 L6.5 6 L0.5 6z" fill="#a3a3a3"/></svg>
</body></html>
